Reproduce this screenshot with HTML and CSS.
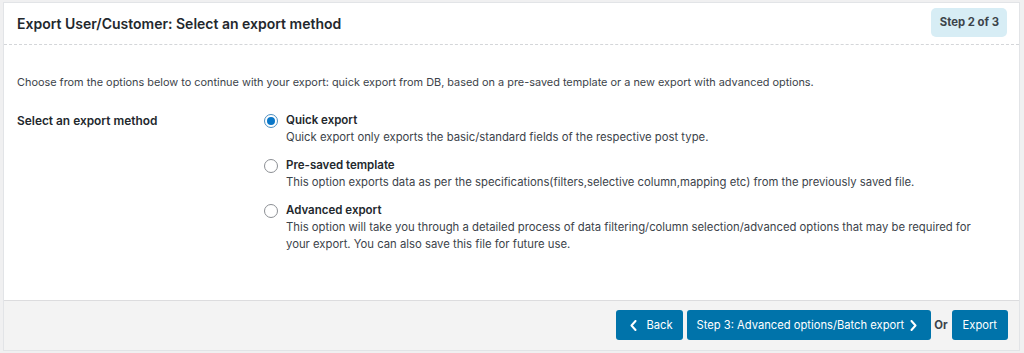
FILE: index.html
```html
<!DOCTYPE html>
<html lang="en">
<head>
<meta charset="utf-8">
<title>Export User/Customer</title>
<link rel="stylesheet" href="styles.css">
</head>
<body>
<div class="card">
  <div class="card-head">
    <h2 class="title">Export User/Customer: Select an export method</h2>
    <span class="step-badge">Step 2 of 3</span>
  </div>
  <div class="card-body">
    <p class="intro">Choose from the options below to continue with your export: quick export from DB, based on a pre-saved template or a new export with advanced options.</p>
    <div class="method-row">
      <div class="method-label">Select an export method</div>
      <div class="method-options">
        <label class="option">
          <span class="radio checked"></span>
          <span class="option-text">
            <span class="option-title">Quick export</span>
            <span class="option-desc">Quick export only exports the basic/standard fields of the respective post type.</span>
          </span>
        </label>
        <label class="option">
          <span class="radio"></span>
          <span class="option-text">
            <span class="option-title">Pre-saved template</span>
            <span class="option-desc">This option exports data as per the specifications(filters,selective column,mapping etc) from the previously saved file.</span>
          </span>
        </label>
        <label class="option">
          <span class="radio"></span>
          <span class="option-text">
            <span class="option-title">Advanced export</span>
            <span class="option-desc">This option will take you through a detailed process of data filtering/column selection/advanced options that may be required for your export. You can also save this file for future use.</span>
          </span>
        </label>
      </div>
    </div>
  </div>
  <div class="card-foot">
    <button class="btn btn-back" type="button"><svg class="chev" width="7" height="11" viewBox="0 0 7 11"><polyline points="5.5,1 1.5,5.5 5.5,10" fill="none" stroke="#fff" stroke-width="2" stroke-linecap="round" stroke-linejoin="round"/></svg><span>Back</span></button>
    <button class="btn btn-next" type="button"><span>Step 3: Advanced options/Batch export</span><svg class="chev" width="7" height="11" viewBox="0 0 7 11"><polyline points="1.5,1 5.5,5.5 1.5,10" fill="none" stroke="#fff" stroke-width="2" stroke-linecap="round" stroke-linejoin="round"/></svg></button>
    <span class="or">Or</span>
    <button class="btn btn-export" type="button">Export</button>
  </div>
</div>
</body>
</html>
```

FILE: styles.css
```css
* { box-sizing: border-box; }

html, body {
  margin: 0;
  padding: 0;
}

body {
  background: #f0f0f1;
  padding: 2px 4px 2px 3px;
  font-family: Inter, "Liberation Sans", Arial, sans-serif;
  font-size: 11px;
  color: #3c434a;
}

.card {
  background: #fff;
  border: 1px solid #e2e4e7;
  height: 349px;
  display: flex;
  flex-direction: column;
}

.card-head {
  display: flex;
  align-items: center;
  justify-content: space-between;
  height: 42px;
  padding: 0 12px 0 13px;
  border-bottom: 1px dashed #d4d6d9;
}

.title {
  margin: 0;
  font-size: 14px;
  font-weight: 600;
  color: #23282d;
}

.step-badge {
  background: #d7edf5;
  border-radius: 5px;
  padding: 0 8px 0 9px;
  height: 29px;
  line-height: 29px;
  font-weight: 700;
  font-size: 11.3px;
  color: #3c434a;
  margin-top: -2px;
}

.card-body {
  flex: 1;
  padding: 28px 13px 0 13px;
}

.intro {
  margin: 0 0 21px 0;
  line-height: 18px;
  font-size: 10.9px;
}

.method-row {
  display: flex;
}

.method-label {
  width: 247px;
  flex: none;
  font-weight: 600;
  color: #23282d;
  line-height: 18px;
  font-size: 11.9px;
}

.method-options {
  display: flex;
  flex-direction: column;
  gap: 11px;
  max-width: 722px;
}

.option {
  display: flex;
  align-items: flex-start;
  gap: 8px;
}

.radio {
  flex: none;
  width: 14px;
  height: 14px;
  border: 1px solid #8c8f94;
  border-radius: 50%;
  margin-top: 2px;
  background: #fff;
  display: flex;
  align-items: center;
  justify-content: center;
}

.radio.checked {
  border-color: #4d8fc1;
}

.radio.checked::after {
  content: "";
  width: 8px;
  height: 8px;
  border-radius: 50%;
  background: #0a77c8;
}

.option-text {
  display: flex;
  flex-direction: column;
  line-height: 17px;
  font-size: 11.3px;
}

.option-title {
  font-weight: 600;
  font-size: 11.5px;
  color: #23282d;
}

.option-desc {
  color: #3c434a;
}

.card-foot {
  height: 50px;
  flex: none;
  background: #f3f3f3;
  border-top: 1px solid #dcdcde;
  display: flex;
  align-items: center;
  justify-content: flex-end;
  padding: 0 11px 1px 0;
  gap: 4px;
}

.btn {
  height: 30px;
  border: none;
  border-radius: 3px;
  background: #0073aa;
  color: #fff;
  font-family: Inter, "Liberation Sans", Arial, sans-serif;
  font-size: 11.2px;
  display: flex;
  align-items: center;
  cursor: pointer;
}

.btn-back { padding: 0 10px 0 14px; gap: 9px; }
.btn-next { padding: 0 14px 0 10px; gap: 6px; }
.btn-export { padding: 0 11px; }

.chev { display: block; }

.or {
  font-weight: 700;
  font-size: 11.3px;
  color: #3c434a;
  margin: 0 0 0 -1px;
}
```
